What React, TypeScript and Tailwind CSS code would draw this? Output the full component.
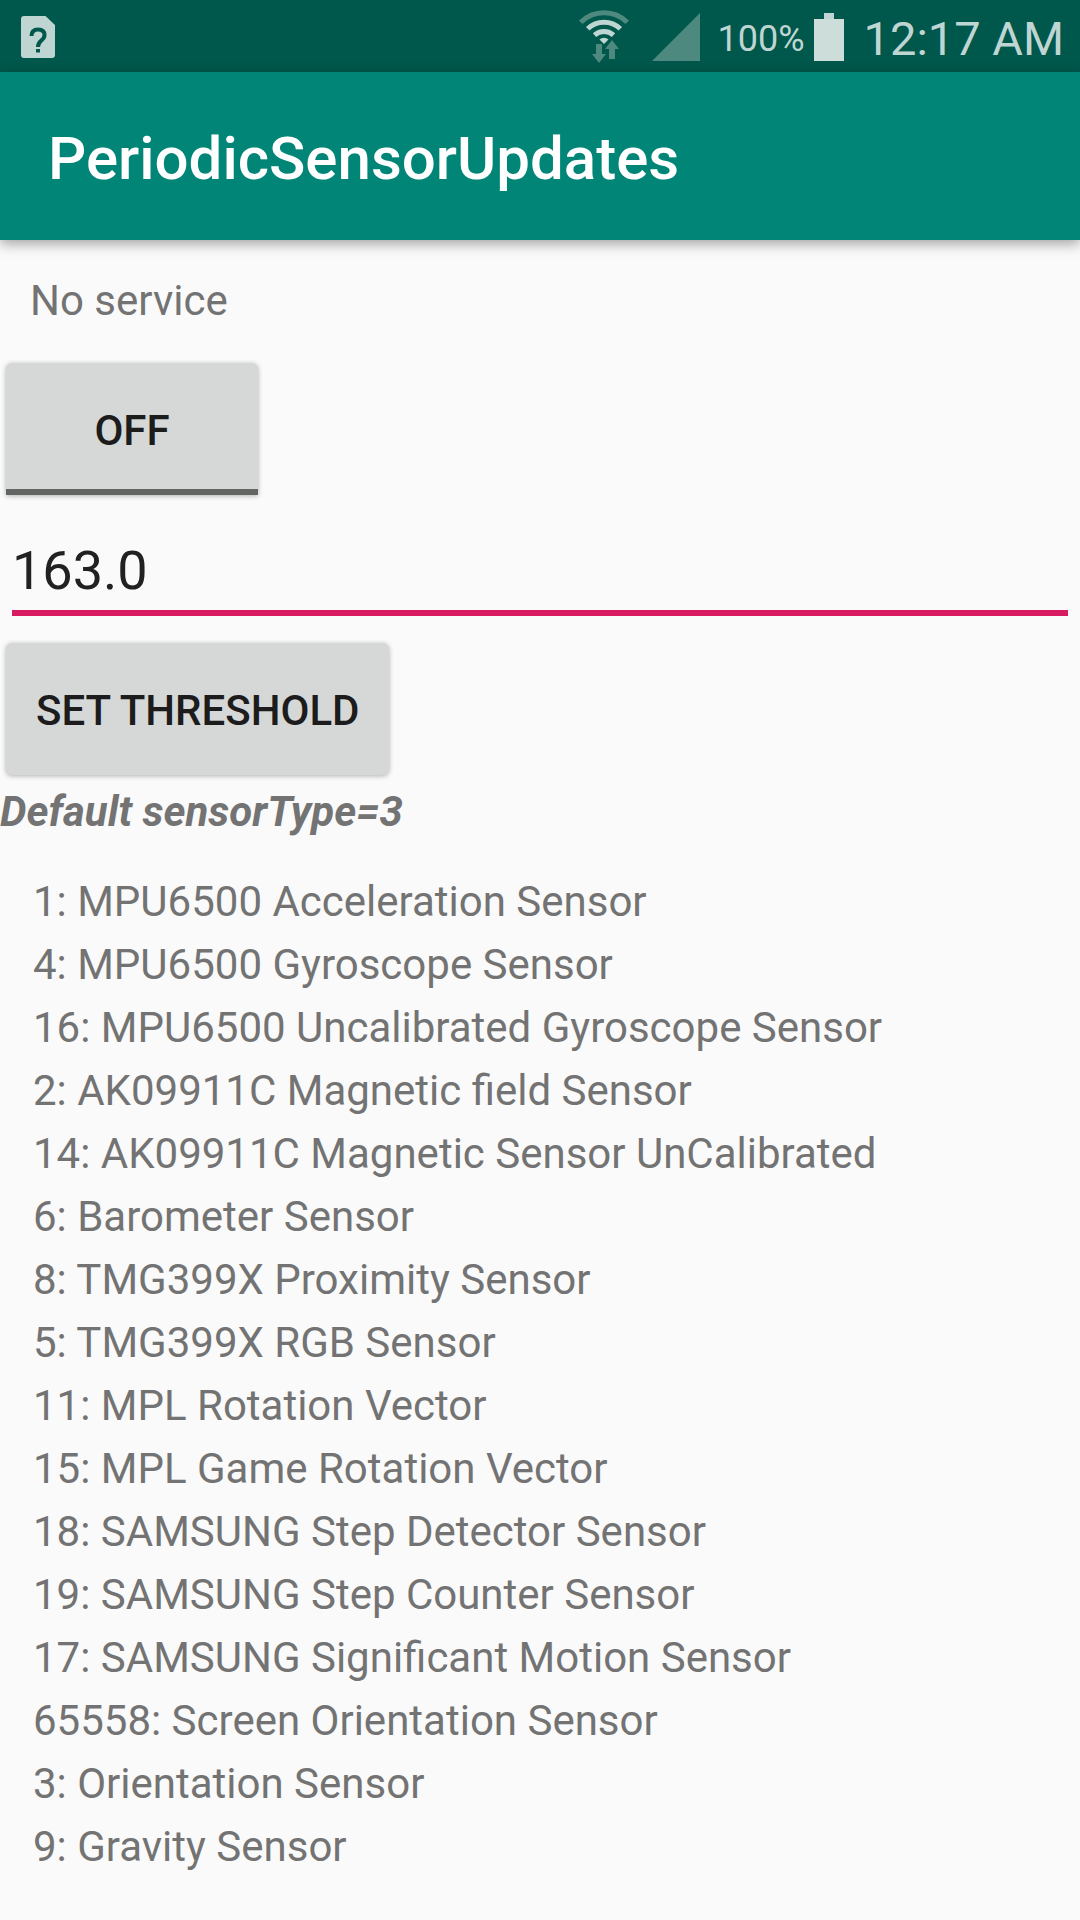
const sensors = [
  '1: MPU6500 Acceleration Sensor',
  '4: MPU6500 Gyroscope Sensor',
  '16: MPU6500 Uncalibrated Gyroscope Sensor',
  '2: AK09911C Magnetic field Sensor',
  '14: AK09911C Magnetic Sensor UnCalibrated',
  '6: Barometer Sensor',
  '8: TMG399X Proximity Sensor',
  '5: TMG399X RGB Sensor',
  '11: MPL Rotation Vector',
  '15: MPL Game Rotation Vector',
  '18: SAMSUNG Step Detector Sensor',
  '19: SAMSUNG Step Counter Sensor',
  '17: SAMSUNG Significant Motion Sensor',
  '65558: Screen Orientation Sensor',
  '3: Orientation Sensor',
  '9: Gravity Sensor',
];

function StatusBar() {
  return (
    <div className="flex h-[72px] items-center bg-[#00574b] pt-0.5 pr-4 pl-[21px] text-[#bfd5d2]">
      <svg width="34" height="42" viewBox="0 0 34 42" role="img" aria-label="SIM status unknown">
        <path d="M3 0H24.500L34 9V39Q34 42 31 42H3Q0 42 0 39V3Q0 0 3 0Z" fill="#bfd5d2" />
        <path d="M10.500 20Q10.500 13.500 17 13.500Q23.500 13.500 23.500 19Q23.500 22 20.500 24.300Q17 27 17 31" fill="none" stroke="#00574b" strokeWidth="4" />
        <path d="M15 33H19V36.500H15Z" fill="#00574b" />
      </svg>
      <div className="flex-1" />
      <svg width="50" height="54" viewBox="0 0 50 54" role="img" aria-label="Wi-Fi">
        <path d="M1.700 12.300A33 33 0 0 1 48.300 12.300" fill="none" stroke="#4d897f" strokeWidth="5" />
        <path d="M8.700 18.800A23.500 23.500 0 0 1 41.300 18.800M15.500 25.200A14 14 0 0 1 34.500 25.200" fill="none" stroke="#bfd5d2" strokeWidth="5" />
        <path d="M20.500 29.500A6.500 6.500 0 0 1 29.500 29.500L25 34Z" fill="#bfd5d2" />
        <path d="M17 34H23V44H27L20 53L13 44H17ZM30 49H36V39H40L33 30L26 39H30Z" fill="#4d897f" />
      </svg>
      <svg className="ml-[23px]" width="48" height="48" viewBox="0 0 48 48" role="img" aria-label="Signal">
        <path d="M48 0V48H0Z" fill="#4d897f" />
      </svg>
      <span className="ml-[18px] pt-1 text-[36px]">100%</span>
      <svg className="ml-[9px]" width="30" height="48" viewBox="0 0 30 48" role="img" aria-label="Battery full">
        <path d="M10 0H20V6H10Z" fill="#bfd5d2" />
        <path d="M0 6H30V48H0Z" fill="#cdddda" />
      </svg>
      <span className="ml-[20px] pt-1 text-[47px]">12:17 AM</span>
    </div>
  );
}

export default function App() {
  return (
    <div className="min-h-screen bg-[#fafafa] font-['Roboto',sans-serif] text-[#737373]">
      <StatusBar />
      <header className="flex h-[168px] items-center bg-[#008577] px-12 pt-1.5 shadow-[0_4px_12px_rgba(0,0,0,0.35)]">
        <h1 className="text-[60px] font-medium text-white">PeriodicSensorUpdates</h1>
      </header>
      <main className="flex flex-col items-start">
        <p className="mt-[36px] ml-[30px] text-[42px] leading-[50px]">No service</p>
        <button className="mt-[37px] ml-[6px] h-[132px] w-[252px] rounded-t-[6px] border-b-6 border-[#636563] bg-[#d6d7d7] pt-[9px] text-[42px] font-medium text-[#1c1c1c] shadow-[0_1px_5px_rgba(0,0,0,0.3)]">OFF</button>
        <div className="mt-[35px] w-full px-3">
          <input aria-label="Threshold" defaultValue="163.0" className="block h-[86px] w-full border-b-6 border-[#d81b60] bg-transparent text-[54px] text-[#212121] outline-none" />
        </div>
        <button className="mt-[27px] ml-[6px] h-[132px] rounded-[6px] bg-[#d6d7d7] px-[30px] pt-[2px] text-[42px] font-medium text-[#1c1c1c] shadow-[0_1px_5px_rgba(0,0,0,0.3)]">SET THRESHOLD</button>
        <p className="mt-[12px] text-[42px] leading-[50px] font-bold italic">Default sensorType=3</p>
        <ul className="mt-[33px] ml-[33px] text-[42px] leading-[63px]">
          {sensors.map((s) => <li key={s}>{s}</li>)}
        </ul>
      </main>
    </div>
  );
}
